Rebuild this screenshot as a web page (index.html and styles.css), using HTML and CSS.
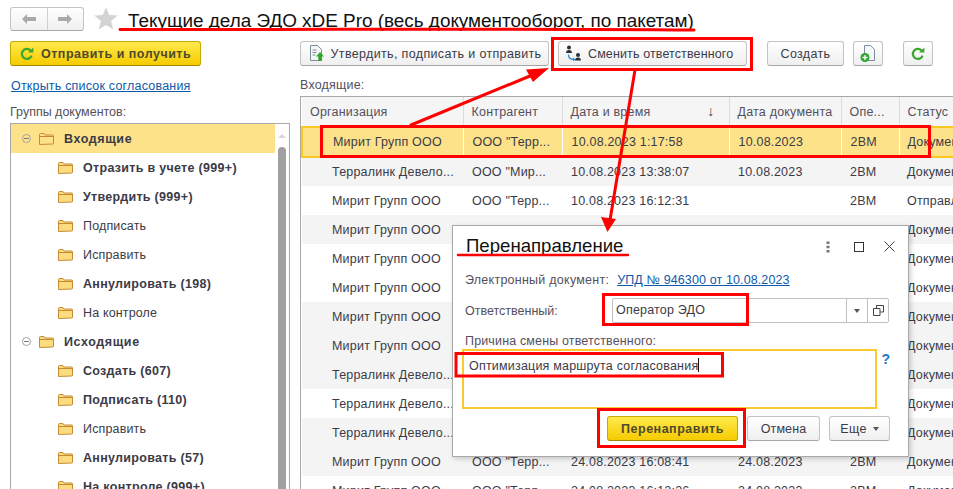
FILE: index.html
```html
<!DOCTYPE html>
<html lang="ru">

<head>
    <meta charset="UTF-8">
    <title>Текущие дела ЭДО</title>
    <link rel="stylesheet" href="styles.css">
</head>

<body>
    <div class="page">
        <div class="top-bar">
            <div class="nav-btns">
                <span class="nav-btn">
                    <svg width="16" height="12" viewBox="0 0 16 12"><path d="M1 6l5-5v3h9v4H6v3z" fill="#a9a9a9"/></svg>
                </span>
                <span class="nav-btn">
                    <svg width="16" height="12" viewBox="0 0 16 12"><path d="M15 6l-5-5v3H1v4h9v3z" fill="#a9a9a9"/></svg>
                </span>
            </div>
            <svg class="star" width="24" height="23" viewBox="0 0 24 23"><path d="M12 0l3.2 8.1 8.6.5-6.7 5.5 2.2 8.4L12 17.9l-7.3 4.6 2.2-8.4L.2 8.600l8.6-.5z" fill="#d4d4d4"/></svg>
            <h1 class="page-title">Текущие дела ЭДО xDE Pro (весь документооборот, по пакетам)</h1>
        </div>

        <div class="columns">
            <!-- левая панель с группами -->
            <div class="left-panel">
                <div class="btn btn-yellow btn-send">
                    <svg width="14" height="14" viewBox="0 0 14 14"><path d="M11.6 8.6A5 5 0 1 1 10.4 3.4" fill="none" stroke="#3aa62c" stroke-width="2.2"/><path d="M8 5.6h5.4V.4z" fill="#3aa62c"/></svg>
                    Отправить и получить
                </div>
                <a class="link open-list">Открыть список согласования</a>
                <div class="label groups-label">Группы документов:</div>
                <div class="tree">
                    <div class="tree-row group active"><i class="minus"></i><svg class="folder-o"><use href="#folder-outline"/></svg>Входящие</div>
                    <div class="tree-row sub strong"><svg class="folder"><use href="#folder"/></svg>Отразить в учете (999+)</div>
                    <div class="tree-row sub strong"><svg class="folder"><use href="#folder"/></svg>Утвердить (999+)</div>
                    <div class="tree-row sub"><svg class="folder"><use href="#folder"/></svg>Подписать</div>
                    <div class="tree-row sub"><svg class="folder"><use href="#folder"/></svg>Исправить</div>
                    <div class="tree-row sub strong"><svg class="folder"><use href="#folder"/></svg>Аннулировать (198)</div>
                    <div class="tree-row sub"><svg class="folder"><use href="#folder"/></svg>На контроле</div>
                    <div class="tree-row group"><i class="minus"></i><svg class="folder-o"><use href="#folder"/></svg>Исходящие</div>
                    <div class="tree-row sub strong"><svg class="folder"><use href="#folder"/></svg>Создать (607)</div>
                    <div class="tree-row sub strong"><svg class="folder"><use href="#folder"/></svg>Подписать (110)</div>
                    <div class="tree-row sub"><svg class="folder"><use href="#folder"/></svg>Исправить</div>
                    <div class="tree-row sub strong"><svg class="folder"><use href="#folder"/></svg>Аннулировать (57)</div>
                    <div class="tree-row sub strong"><svg class="folder"><use href="#folder"/></svg>На контроле (999+)</div>
                    <div class="tree-scroll">
                        <span class="scroll-up"></span>
                        <span class="scroll-thumb"></span>
                    </div>
                </div>
            </div>

            <!-- правая часть со списком -->
            <div class="right-panel">
                <div class="toolbar">
                    <div class="btn btn-approve">
                        <svg width="17" height="17" viewBox="0 0 17 17"><path d="M2.500 .5h7l4 4v11h-11z" fill="#f4f6f8" stroke="#7f8c99"/><path d="M4.500 5h4M4.500 7.500h4M4.500 10h3" stroke="#7f8c99"/><path d="M12 7l4 4.500h-2.300V16h-3.400v-4.500H8z" fill="#2ea52c"/></svg>
                        Утвердить, подписать и отправить
                    </div>
                    <div class="btn btn-change">
                        <svg width="17" height="17" viewBox="0 0 17 17"><circle cx="4" cy="2.500" r="2" fill="#2b2f36"/><path d="M1 8c0-2 1.200-3 3-3s3 1 3 3z" fill="#2b2f36"/><circle cx="13" cy="10" r="2" fill="#2b2f36"/><path d="M10 15.500c0-2 1.200-3 3-3s3 1 3 3z" fill="#2b2f36"/><path d="M3.500 9.500c0 3 1.500 5 5 5" fill="none" stroke="#2f8fd8" stroke-width="1.400"/><path d="M8 12.500l2.500 2-2.500 2z" fill="#2f8fd8"/></svg>
                        Сменить ответственного
                    </div>
                    <div class="btn btn-create">Создать</div>
                    <div class="btn btn-icon btn-add">
                        <svg width="16" height="18" viewBox="0 0 16 18"><path d="M4.500 .5h6l4 4v11h-10z" fill="#f4f6f8" stroke="#7f8c99"/><circle cx="5" cy="12.500" r="4.500" fill="#2ea52c"/><path d="M5 10v5M2.500 12.500h5" stroke="#fff" stroke-width="1.300"/></svg>
                    </div>
                    <div class="btn btn-icon btn-refresh">
                        <svg width="14" height="14" viewBox="0 0 14 14"><path d="M11.600 8.600A5 5 0 1 1 10.400 3.400" fill="none" stroke="#3aa62c" stroke-width="2.200"/><path d="M8 5.600h5.400V.4z" fill="#3aa62c"/></svg>
                    </div>
                </div>
                <div class="label list-label">Входящие:</div>
                <div class="table-box">
                    <table class="docs">
                        <colgroup>
                            <col class="c-org"><col class="c-agent"><col class="c-date"><col class="c-docdate"><col class="c-op"><col class="c-status">
                        </colgroup>
                        <thead>
                            <tr>
                                <th>Организация</th>
                                <th>Контрагент</th>
                                <th class="sorted">Дата и время<span class="sort-arrow">↓</span></th>
                                <th>Дата документа</th>
                                <th>Опе...</th>
                                <th>Статус</th>
                            </tr>
                        </thead>
                        <tbody>
                            <tr class="selected"><td>Мирит Групп ООО</td><td>ООО "Терр...</td><td>10.08.2023 1:17:58</td><td>10.08.2023</td><td>2BM</td><td>Документ</td></tr>
                            <tr class="gray"><td>Терралинк Девело...</td><td>ООО "Мир...</td><td>10.08.2023 13:38:07</td><td>10.08.2023</td><td>2BM</td><td>Документ</td></tr>
                            <tr><td>Мирит Групп ООО</td><td>ООО "Терр...</td><td>10.08.2023 16:12:31</td><td></td><td>2BM</td><td>Отправлен</td></tr>
                            <tr class="gray"><td>Мирит Групп ООО</td><td>ООО "Терр...</td><td>11.08.2023 11:30:33</td><td>11.08.2023</td><td>2BM</td><td>Документ</td></tr>
                            <tr><td>Мирит Групп ООО</td><td></td><td></td><td></td><td></td><td>Документ</td></tr>
                            <tr><td>Мирит Групп ООО</td><td></td><td></td><td></td><td></td><td>Документ</td></tr>
                            <tr class="gray"><td>Мирит Групп ООО</td><td></td><td></td><td></td><td></td><td>Документ</td></tr>
                            <tr class="gray"><td>Мирит Групп ООО</td><td></td><td></td><td></td><td></td><td>Документ</td></tr>
                            <tr class="gray"><td>Терралинк Девело...</td><td></td><td></td><td></td><td></td><td>Документ</td></tr>
                            <tr><td>Терралинк Девело...</td><td></td><td></td><td></td><td></td><td>Документ</td></tr>
                            <tr class="gray"><td>Терралинк Девело...</td><td></td><td></td><td></td><td></td><td>Документ</td></tr>
                            <tr class="gray"><td>Мирит Групп ООО</td><td>ООО "Терр...</td><td>24.08.2023 16:08:41</td><td>24.08.2023</td><td>2BM</td><td>Документ</td></tr>
                            <tr><td>Мирит Групп ООО</td><td>ООО "Терр...</td><td>24.08.2023 16:12:26</td><td>24.08.2023</td><td>2BM</td><td>Документ</td></tr>
                        </tbody>
                    </table>
                </div>
            </div>
        </div>

        <!-- окно перенаправления -->
        <div class="dialog">
            <div class="dialog-head">
                <div class="dialog-title">Перенаправление</div>
                <div class="dialog-tools">
                    <svg width="4" height="12" viewBox="0 0 4 12"><path d="M.5 .5h3v2.500h-3zM.5 4.800h3v2.500h-3zM.5 9h3v2.500h-3z" fill="#777"/></svg>
                    <svg width="10" height="10" viewBox="0 0 10 10"><rect x=".5" y=".5" width="9" height="9" fill="none" stroke="#333"/></svg>
                    <svg class="tool-close" width="11" height="11" viewBox="0 0 11 11"><path d="M.5 .5l10 10M10.500 .5l-10 10" stroke="#444"/></svg>
                </div>
            </div>
            <div class="field-row doc-row">
                <span class="label">Электронный документ:</span>
                <a class="link">УПД № 946300 от 10.08.2023</a>
            </div>
            <div class="field-row resp-row">
                <span class="label resp-label">Ответственный:</span>
                <div class="select-box">
                    <span class="select-text">Оператор ЭДО</span>
                    <span class="select-btn"><i class="caret"></i></span>
                    <span class="select-btn">
                        <svg width="11" height="11" viewBox="0 0 11 11"><path d="M3.500 3V.5h7v6.500H7.500M.5 3.500h6.500v7H.5z" fill="none" stroke="#444"/></svg>
                    </span>
                </div>
            </div>
            <div class="label reason-label">Причина смены ответственного:</div>
            <div class="reason-row">
                <div class="reason-box">Оптимизация маршрута согласования<span class="cursor"></span></div>
                <span class="help">?</span>
            </div>
            <div class="dialog-btns">
                <div class="btn btn-yellow btn-redirect">Перенаправить</div>
                <div class="btn btn-cancel">Отмена</div>
                <div class="btn btn-more">Еще<i class="caret"></i></div>
            </div>
        </div>

        <!-- красные пометки поверх скриншота -->
        <svg class="marks" width="953" height="489" viewBox="0 0 953 489">
            <g fill="none" stroke="#f00" stroke-width="3">
                <rect x="552.500" y="38.500" width="199" height="31"/>
                <rect x="321.500" y="126.500" width="608" height="30"/>
                <rect x="603.500" y="294.500" width="144" height="30"/>
                <rect x="456" y="353.500" width="266.500" height="22.500"/>
                <rect x="598.500" y="409.500" width="146" height="37"/>
            </g>
            <g fill="none" stroke="#f00" stroke-linecap="round">
                <path d="M120 29.500C300 30 500 28 694 30" stroke-width="3"/>
                <path d="M458 255h170" stroke-width="2.500"/>
                <path d="M411 125L530 76" stroke-width="3"/>
                <path d="M635 70L610 220" stroke-width="3"/>
            </g>
            <path d="M549 68L526 69.500L533 82z" fill="#f00"/>
            <path d="M607.500 232L601 217L616 219z" fill="#f00"/>
        </svg>
    </div>

    <svg class="defs" width="0" height="0">
        <symbol id="folder" viewBox="0 0 15 12">
            <path d="M.5 11.500V1.500q0-1 1-1h3.500l1 1.500h7.500q1 0 1 1v7.500q0 .5-1 .5z" fill="#fbdc7f" stroke="#c68a35"/>
            <path d="M.5 3.500h14" stroke="#c68a35"/>
        </symbol>
        <symbol id="folder-outline" viewBox="0 0 15 12">
            <path d="M.5 11.500V1.500q0-1 1-1h3.500l1 1.500h7.500q1 0 1 1v7.500q0 .5-1 .5z" fill="none" stroke="#c68a35"/>
            <path d="M.5 3.500h14" stroke="#c68a35"/>
        </symbol>
    </svg>
</body>

</html>
```

FILE: styles.css
```css
* {
    margin: 0;
    padding: 0;
    box-sizing: border-box;
}

html,
body {
    width: 100%;
    height: 100%;
    overflow: hidden;
    background-color: #fff;
}

body {
    font-family: "Liberation Sans", Arial, sans-serif;
    font-size: 12.5px;
    color: #3b3b48;
}

.page {
    position: relative;
    width: 953px;
    height: 489px;
    overflow: hidden;
    padding: 6px 0 0 10px;
}

.defs {
    position: absolute;
}

/* шапка */
.top-bar {
    display: flex;
    align-items: center;
    height: 25px;
}

.nav-btns {
    display: flex;
    width: 74px;
    height: 24px;
    border: 1px solid #c4c4c4;
    border-bottom-color: #a8a8a8;
    border-radius: 3px;
    background: linear-gradient(#fff, #f0f0f0);
}

.nav-btn {
    flex: 1;
    display: flex;
    align-items: center;
    justify-content: center;
}

.nav-btn + .nav-btn {
    border-left: 1px solid #d0d0d0;
}

.star {
    margin-left: 10px;
}

.page-title {
    margin-left: 10px;
    padding-top: 4px;
    font-size: 18.9px;
    font-weight: normal;
    color: #111;
    white-space: nowrap;
}

.columns {
    display: flex;
    margin-top: 10px;
}

/* кнопки */
.btn {
    display: flex;
    align-items: center;
    justify-content: center;
    height: 25px;
    border: 1px solid #c4c4c4;
    border-bottom-color: #a6a6a6;
    border-radius: 3px;
    background: linear-gradient(#fff, #efefef);
    white-space: nowrap;
    letter-spacing: .35px;
}

.btn-yellow {
    border-color: #c9a800;
    border-bottom-color: #a68b00;
    background: linear-gradient(#ffe94d, #f6cc00);
    font-weight: bold;
    color: #4f4a2c;
    letter-spacing: .5px;
}

.link {
    color: #0f5aa8;
    text-decoration: underline;
}

.label {
    color: #55505c;
}

/* левая панель */
.left-panel {
    flex: none;
    width: 280px;
    height: 448px;
}

.btn-send {
    width: 191px;
    gap: 7px;
    justify-content: flex-start;
    padding-left: 9px;
}

.open-list {
    display: block;
    margin: 13px 0 0 1px;
    line-height: 15px;
    letter-spacing: .2px;
}

.groups-label {
    margin-top: 11px;
    line-height: 15px;
}

.tree {
    position: relative;
    margin-top: 3px;
    height: 381px;
    border: 1px solid #a8a8a8;
    border-bottom: 0;
    overflow: hidden;
}

.tree-row {
    display: flex;
    align-items: center;
    height: 29px;
    white-space: nowrap;
    letter-spacing: .15px;
}

.tree-row.group {
    width: 264px;
    padding-left: 11px;
    font-weight: bold;
    letter-spacing: .6px;
}

.tree-row.active {
    background-color: #fde28a;
}

.tree-row.sub {
    padding-left: 47px;
}

.tree-row.strong {
    font-weight: bold;
    letter-spacing: .3px;
}

.minus {
    position: relative;
    width: 9px;
    height: 9px;
    margin-right: 8px;
    border: 1px solid #a3a3a3;
    border-radius: 50%;
}

.minus::after {
    content: "";
    position: absolute;
    top: 3px;
    left: 1px;
    width: 5px;
    height: 1px;
    background-color: #777;
}

.folder-o,
.folder {
    flex: none;
    width: 15px;
    height: 12px;
    margin-right: 10px;
}

.tree-scroll {
    position: absolute;
    top: 0;
    right: 3px;
    bottom: 0;
    width: 8px;
}

.scroll-up {
    position: absolute;
    top: 10px;
    left: 0;
    border: 4px solid transparent;
    border-top: 0;
    border-bottom: 4px solid #d6d6d6;
}

.scroll-thumb {
    position: absolute;
    top: 23px;
    bottom: 0;
    left: 0;
    width: 8px;
    border-radius: 4px 4px 0 0;
    background-color: #a0a0a0;
}

/* правая часть */
.right-panel {
    flex: none;
    width: 653px;
    margin-left: 10px;
}

.toolbar {
    display: flex;
}

.btn-approve {
    width: 249px;
    gap: 6px;
}

.btn-change {
    width: 189px;
    margin-left: 9px;
    gap: 6px;
    justify-content: flex-start;
    padding-left: 6px;
    letter-spacing: .12px;
}

.btn-create {
    width: 77px;
    margin-left: 20px;
}

.btn-icon {
    width: 30px;
}

.btn-add {
    margin-left: 9px;
}

.btn-refresh {
    margin-left: 20px;
}

.list-label {
    margin-top: 12px;
    line-height: 15px;
    letter-spacing: .2px;
}

.table-box {
    margin-top: 3px;
    border-top: 1px solid #a8a8a8;
    border-left: 1px solid #a8a8a8;
    height: 400px;
    overflow: hidden;
}

.docs {
    table-layout: fixed;
    width: 652px;
    border-collapse: collapse;
}

.c-org { width: 161px; }
.c-agent { width: 99px; }
.c-date { width: 167px; }
.c-docdate { width: 112px; }
.c-op { width: 58px; }
.c-status { width: 55px; }

.docs th {
    height: 30px;
    padding-left: 8px;
    font-weight: normal;
    text-align: left;
    color: #55505c;
    background-color: #f5f5f5;
    border-right: 1px solid #dcdcdc;
    border-bottom: 1px solid #dcdcdc;
    white-space: nowrap;
    overflow: hidden;
    letter-spacing: .2px;
}

.docs th:last-child {
    border-right: 0;
}

.sorted {
    position: relative;
}

.sort-arrow {
    position: absolute;
    right: 14px;
    top: 6px;
    font-size: 14px;
    color: #444;
}

.docs td {
    height: 29px;
    padding-left: 9px;
    white-space: nowrap;
    overflow: hidden;
    letter-spacing: .2px;
}

.docs td:first-child {
    padding-left: 30px;
}

.docs td:last-child {
    padding-left: 8px;
}

.docs .gray td {
    background-color: #f4f4f4;
}

.docs .selected td {
    height: 30px;
    background-color: #fde28a;
    border-top: 2px solid #fcc924;
    border-bottom: 2px solid #fcc924;
    border-right: 1px solid #fff;
}

.docs .selected td:first-child {
    border-left: 2px solid #fcc924;
}

/* диалог */
.dialog {
    position: absolute;
    top: 225px;
    left: 452px;
    width: 457px;
    height: 232px;
    padding: 0 18px 0 12px;
    background-color: #fff;
    border: 1px solid #a8a8a8;
    box-shadow: 2px 2px 5px rgba(0, 0, 0, .18);
}

.dialog-head {
    display: flex;
    align-items: center;
    justify-content: space-between;
    height: 40px;
}

.dialog-title {
    margin-left: 1px;
    font-size: 18.6px;
    color: #111;
}

.dialog-tools {
    display: flex;
    align-items: center;
    gap: 24px;
    margin-right: -5px;
    margin-top: 1px;
}

.tool-close {
    margin-left: -4px;
}

.field-row {
    display: flex;
    align-items: center;
}

.doc-row {
    margin-top: 6px;
    height: 15px;
    gap: 8px;
}

.doc-row .label {
    letter-spacing: .25px;
}

.doc-row .link {
    letter-spacing: .12px;
}

.resp-row {
    margin-top: 11px;
    height: 25px;
}

.resp-label {
    width: 147px;
}

.select-box {
    display: flex;
    width: 277px;
    height: 25px;
    border: 1px solid #c0c0c0;
    border-radius: 2px;
}

.select-text {
    flex: 1;
    padding-left: 3px;
    line-height: 23px;
    letter-spacing: .2px;
}

.select-btn {
    display: flex;
    align-items: center;
    justify-content: center;
    width: 21px;
    border-left: 1px solid #c0c0c0;
}

.caret {
    width: 0;
    height: 0;
    border: 3.500px solid transparent;
    border-top: 4px solid #555;
    border-bottom: 0;
}

.reason-label {
    margin-top: 11px;
    line-height: 15px;
    letter-spacing: .15px;
}

.reason-row {
    display: flex;
    margin-left: -3px;
}

.reason-box {
    width: 417px;
    height: 60px;
    padding: 7px 5px 0 5px;
    border: 2px solid #fbc92e;
    line-height: 15px;
    letter-spacing: .2px;
}

.cursor {
    display: inline-block;
    width: 1px;
    height: 14px;
    vertical-align: -2px;
    background-color: #111;
}

.help {
    margin: 2px 0 0 4px;
    font-size: 14px;
    font-weight: bold;
    color: #1a78c2;
}

.dialog-btns {
    display: flex;
    justify-content: flex-end;
    margin-top: 7px;
}

.btn-redirect {
    width: 131px;
}

.btn-cancel {
    width: 73px;
    margin-left: 9px;
    letter-spacing: .1px;
}

.btn-more {
    width: 61px;
    margin-left: 9px;
    gap: 6px;
}

/* пометки */
.marks {
    position: absolute;
    top: 0;
    left: 0;
    pointer-events: none;
}
```
